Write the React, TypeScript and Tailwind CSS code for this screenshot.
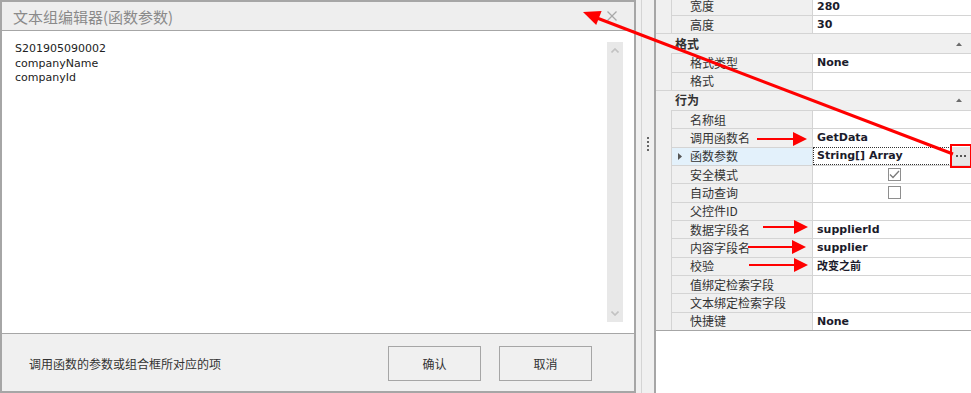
import React from "react";

type Row =
  | { kind: "cat"; label: string }
  | {
      kind: "prop";
      name: string;
      value?: string;
      check?: boolean;
      selected?: boolean;
    };

const rows: Row[] = [
  { kind: "prop", name: "宽度", value: "280" },
  { kind: "prop", name: "高度", value: "30" },
  { kind: "cat", label: "格式" },
  { kind: "prop", name: "格式类型", value: "None" },
  { kind: "prop", name: "格式" },
  { kind: "cat", label: "行为" },
  { kind: "prop", name: "名称组" },
  { kind: "prop", name: "调用函数名", value: "GetData" },
  { kind: "prop", name: "函数参数", value: "String[] Array", selected: true },
  { kind: "prop", name: "安全模式", check: true },
  { kind: "prop", name: "自动查询", check: false },
  { kind: "prop", name: "父控件ID" },
  { kind: "prop", name: "数据字段名", value: "supplierId" },
  { kind: "prop", name: "内容字段名", value: "supplier" },
  { kind: "prop", name: "校验", value: "改变之前" },
  { kind: "prop", name: "值绑定检索字段" },
  { kind: "prop", name: "文本绑定检索字段" },
  { kind: "prop", name: "快捷键", value: "None" },
];

function CatRow({ label }: { label: string }) {
  return (
    <div className="h-[20px] shrink-0 flex items-center bg-[#f0f0f0] border-t border-[#d4d4d4] pl-[19px] pr-[9px]">
      <span className="text-[12px] font-bold text-[#333] font-['Noto_Sans_CJK_SC',sans-serif] leading-none">
        {label}
      </span>
      <svg className="ml-auto" width="6" height="4" viewBox="0 0 6 4">
        <polygon points="0,4 3,0.5 6,4" fill="#6b6b6b" />
      </svg>
    </div>
  );
}

function PropRow({ r }: { r: Extract<Row, { kind: "prop" }> }) {
  return (
    <div className="h-[18.33px] shrink-0 flex">
      <div className="w-[16px] shrink-0 bg-[#f0f0f0] border-r border-[#d4d4d4]" />
      <div
        className={
          "w-[141px] shrink-0 border-t border-r border-[#d4d4d4] flex items-center " +
          (r.selected ? "bg-[#e3f1fb] pl-[6px]" : "bg-[#f0f0f0] pl-[18px]")
        }
      >
        {r.selected && (
          <svg className="mr-[8px]" width="4" height="7" viewBox="0 0 4 7">
            <polygon points="0,0 4,3.5 0,7" fill="#555" />
          </svg>
        )}
        <span className="text-[12px] text-[#333] font-['Noto_Sans_CJK_SC',sans-serif] leading-none whitespace-nowrap">
          {r.name}
        </span>
      </div>
      {r.selected ? (
        <div className="flex-1 flex bg-white">
          <div className="flex-1 border border-dotted border-[#333] flex items-center pl-[3px]">
            <span className="text-[11px] font-bold text-[#1b1b2b] font-['DejaVu_Sans','Noto_Sans_CJK_SC',sans-serif] leading-none whitespace-nowrap">
              {r.value}
            </span>
          </div>
          <div className="w-[20px] shrink-0 bg-[#e6e6e6] flex items-center justify-center gap-[2px] pt-[1px]">
            <span className="w-[2px] h-[2px] bg-[#555]" />
            <span className="w-[2px] h-[2px] bg-[#555]" />
            <span className="w-[2px] h-[2px] bg-[#555]" />
          </div>
        </div>
      ) : (
        <div className="flex-1 border-t border-[#d4d4d4] bg-white flex items-center pl-[4px]">
          {r.check !== undefined ? (
            <div className="mx-auto w-[13px] h-[13px] border border-[#8e8e8e] bg-white flex items-center justify-center">
              {r.check && (
                <svg width="11" height="9" viewBox="0 0 11 9">
                  <polyline
                    points="1,4.5 4,7.5 10,1"
                    fill="none"
                    stroke="#7a7a7a"
                    strokeWidth="1.3"
                  />
                </svg>
              )}
            </div>
          ) : (
            <span className="text-[11px] font-bold text-[#1b1b2b] font-['DejaVu_Sans','Noto_Sans_CJK_SC',sans-serif] leading-none whitespace-nowrap">
              {r.value}
            </span>
          )}
        </div>
      )}
    </div>
  );
}

function SmallArrow({ x1, x2, y }: { x1: number; x2: number; y: number }) {
  return (
    <g>
      <line x1={x1} y1={y} x2={x2 - 11} y2={y} stroke="#ff0000" strokeWidth="2" />
      <polygon points={`${x2},${y} ${x2 - 14},${y - 7} ${x2 - 14},${y + 7}`} fill="#ff0000" />
    </g>
  );
}

export default function App() {
  return (
    <div className="relative w-[971px] h-[393px] overflow-hidden bg-white flex">
      {/* Dialog */}
      <div className="w-[636px] h-[393px] shrink-0 border-2 border-[#a6a6a6] flex flex-col bg-white">
        <div className="h-[29px] shrink-0 bg-[#eeeeee] border-b border-[#a6a6a6] flex items-center justify-between pl-[11px] pr-[17px]">
          <span className="text-[15px] text-[#8a8a8a] font-['Noto_Sans_CJK_SC',sans-serif] leading-none">
            文本组编辑器(函数参数)
          </span>
          <svg width="10" height="10" viewBox="0 0 10 10">
            <line x1="0.5" y1="0.5" x2="9.5" y2="9.5" stroke="#a8a8a8" strokeWidth="1.2" />
            <line x1="9.5" y1="0.5" x2="0.5" y2="9.5" stroke="#a8a8a8" strokeWidth="1.2" />
          </svg>
        </div>
        <div className="h-[303px] shrink-0 border-b border-[#a6a6a6] flex pt-[11px] pb-[11px] pl-[13px] pr-[11px]">
          <div className="flex-1 text-[11px] leading-[14.5px] text-[#222] font-['DejaVu_Sans',sans-serif]">
            <div>S201905090002</div>
            <div>companyName</div>
            <div>companyId</div>
          </div>
          <div className="w-[16px] shrink-0 bg-[#e8e8e8] flex flex-col items-center justify-between pt-[6px] pb-[6px]">
            <svg width="8" height="5" viewBox="0 0 8 5">
              <polyline points="0.5,4.5 4,1 7.5,4.5" fill="none" stroke="#c2c2c2" strokeWidth="1.6" />
            </svg>
            <svg width="8" height="5" viewBox="0 0 8 5">
              <polyline points="0.5,0.5 4,4 7.5,0.5" fill="none" stroke="#c2c2c2" strokeWidth="1.6" />
            </svg>
          </div>
        </div>
        <div className="flex-1 bg-[#f0f0f0] flex items-center pl-[27px] pr-[42px]">
          <span className="text-[12px] text-[#333] font-['Noto_Sans_CJK_SC',sans-serif] leading-none mt-[3px]">
            调用函数的参数或组合框所对应的项
          </span>
          <div className="ml-auto flex gap-[18px] pt-[2px]">
            <button className="w-[93px] h-[35px] border border-[#a6a6a6] bg-[#f0f0f0] text-[12px] text-[#333] font-['Noto_Sans_CJK_SC',sans-serif]">
              确认
            </button>
            <button className="w-[93px] h-[35px] border border-[#a6a6a6] bg-[#f0f0f0] text-[12px] text-[#333] font-['Noto_Sans_CJK_SC',sans-serif]">
              取消
            </button>
          </div>
        </div>
      </div>

      {/* Splitter */}
      <div className="w-[18px] shrink-0 h-[393px] bg-[#f0f0f0] flex">
        <div className="w-[5px]" />
        <div className="w-px bg-[#d4d4d4]" />
        <div className="flex-1 flex flex-col items-center pt-[137px] gap-[2px]">
          <span className="w-[2px] h-[2px] bg-[#666]" />
          <span className="w-[2px] h-[2px] bg-[#666]" />
          <span className="w-[2px] h-[2px] bg-[#666]" />
          <span className="w-[2px] h-[2px] bg-[#666]" />
        </div>
      </div>

      {/* Property grid */}
      <div className="flex-1 h-[393px] border-l-2 border-[#a6a6a6] bg-white overflow-hidden flex flex-col">
        <div className="mt-[-3.33px] flex flex-col">
          {rows.map((r, i) =>
            r.kind === "cat" ? <CatRow key={i} label={r.label} /> : <PropRow key={i} r={r} />
          )}
          <div className="h-px bg-[#a6a6a6]" />
        </div>
      </div>

      {/* Annotations */}
      <svg
        className="absolute left-0 top-0 pointer-events-none"
        width="971"
        height="393"
        viewBox="0 0 971 393"
      >
        <line x1="953" y1="154" x2="597" y2="18" stroke="#ff0000" strokeWidth="3" />
        <polygon points="583,12 601.6,11.1 596.2,25.1" fill="#ff0000" />
        <SmallArrow x1={757} x2={807} y={139} />
        <SmallArrow x1={763} x2={808} y={227} />
        <SmallArrow x1={748} x2={806} y={247} />
        <SmallArrow x1={749} x2={808} y={265} />
        <rect x="951" y="145" width="20" height="22" fill="none" stroke="#ff0000" strokeWidth="2" />
      </svg>
    </div>
  );
}
